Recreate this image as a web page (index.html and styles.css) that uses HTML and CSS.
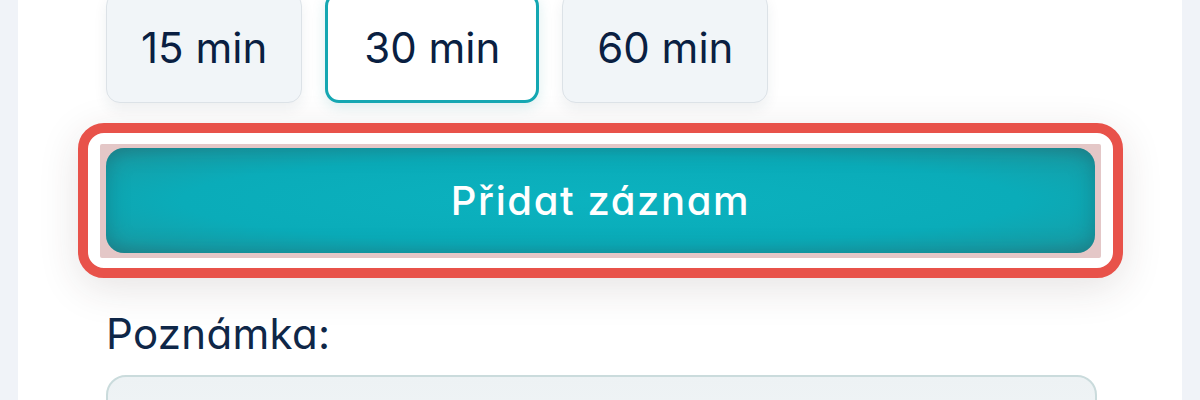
FILE: index.html
```html
<!DOCTYPE html>
<html lang="cs">
<head>
<meta charset="utf-8">
<link rel="stylesheet" href="styles.css">
</head>
<body>
<main class="card">
  <div class="chips">
    <button class="chip">15 min</button>
    <button class="chip chip--active">30 min</button>
    <button class="chip">60 min</button>
  </div>
  <div class="highlight">
    <div class="glow">
      <button class="submit">Přidat záznam</button>
    </div>
  </div>
  <label class="label" for="note">Poznámka:</label>
  <textarea id="note" class="note"></textarea>
</main>
</body>
</html>
```

FILE: styles.css
```css
html, body {
  margin: 0;
  padding: 0;
  background: #f0f3f8;
  height: 400px;
  overflow: hidden;
}

.card {
  display: flow-root;
  margin: 0 18px;
  background: #ffffff;
  height: 400px;
  overflow: hidden;
  padding: 0 59px 0 60px;
  box-sizing: border-box;
  font-family: Inter, "Noto Sans", sans-serif;
  color: #0f2748;
}

.chips {
  display: flex;
  gap: 23px;
  margin: -8px 0 0 28px;
}

.chip {
  font-family: Inter, "Noto Sans", sans-serif;
  font-size: 42px;
  font-weight: 400;
  line-height: 51px;
  color: #0a1f42;
  background: #f1f5f8;
  border: 1px solid #dce2e7;
  border-radius: 14px;
  padding: 29px 34px;
  box-shadow: 0 6px 14px rgba(30, 50, 70, 0.07);
}

.chip--active {
  background: #ffffff;
  border: 3px solid #14a7b2;
  padding: 27px 36px;
  box-shadow: 0 4px 14px rgba(20, 140, 150, 0.15);
}

.highlight {
  margin-top: 20px;
  border: 10px solid #e8524a;
  border-radius: 26px;
  padding: 11px 12px 10px;
  background: #ffffff;
  box-shadow: 0 10px 40px rgba(60, 40, 40, 0.13);
}

.glow {
  background: #e4c7c7;
  padding: 4px 6px 5px;
  border-radius: 2px;
}

.submit {
  display: block;
  width: 100%;
  height: 105px;
  border: none;
  border-radius: 18px;
  background: radial-gradient(ellipse at center, #0bb2bf 0%, #0aacb9 60%, #14a0aa 85%, #1f9199 100%);
  box-shadow: inset 0 0 22px rgba(25, 90, 100, 0.45);
  color: #ffffff;
  font-family: Inter, "Noto Sans", sans-serif;
  font-feature-settings: "cv11" 1;
  font-size: 40px;
  font-weight: 500;
  letter-spacing: 1.6px;
}

.label {
  display: block;
  margin: 30px 0 16px 28px;
  font-size: 42px;
  line-height: 51px;
  font-weight: 400;
  font-feature-settings: "cv11" 1;
  color: #0f2748;
  letter-spacing: 0.3px;
}

.note {
  display: block;
  margin-left: 28px;
  width: calc(100% - 54px);
  height: 120px;
  box-sizing: border-box;
  border: 2px solid #cadbdc;
  border-radius: 20px;
  background: linear-gradient(#edf2f4, #f3f6f8);
  resize: none;
}
```
